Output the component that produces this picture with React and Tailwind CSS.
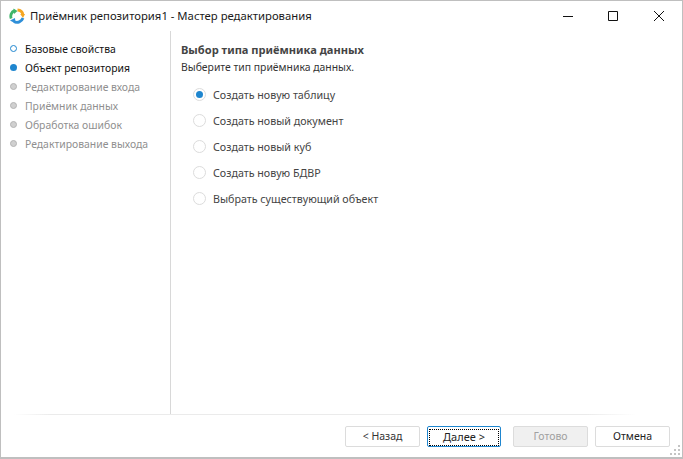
const steps = [
  ["Базовые свойства", "done"],
  ["Объект репозитория", "active"],
  ["Редактирование входа", "off"],
  ["Приёмник данных", "off"],
  ["Обработка ошибок", "off"],
  ["Редактирование выхода", "off"],
];
const options = ["Создать новую таблицу", "Создать новый документ", "Создать новый куб", "Создать новую БДВР", "Выбрать существующий объект"];

function Logo() {
  return (
    <svg width="16" height="16" viewBox="0 0 16 16" fill="none" strokeWidth="2.8">
      <path d="M2.2 10.5 A6.2 6.2 0 0 1 5.5 2.6" stroke="#3fb56a" />
      <path d="M4.5 0.5 L8.5 3 L5 6 Z" fill="#3fb56a" stroke="none" />
      <path d="M8.5 2 A6 6 0 0 1 14 7" stroke="#f5a623" />
      <path d="M11.2 6 L16 6 L14 10 Z" fill="#f5a623" stroke="none" />
      <path d="M14 10 A6.4 6.4 0 0 1 5 13.6" stroke="#2f8fd8" />
      <path d="M1 12.5 L6 10 L6.5 15.5 Z" fill="#2f8fd8" stroke="none" />
    </svg>
  );
}

function Btn({ children, cls }) {
  return (
    <div className={"h-[21px] pt-px flex items-center justify-center rounded-[2px] border text-[10.5px] " + cls}>{children}</div>
  );
}

export default function App() {
  return (
    <div className="w-[683px] h-[459px] flex flex-col bg-white border border-[#bfbfbf] border-b-2 overflow-hidden font-['Noto_Sans',sans-serif] text-[10.4px] relative">
      <div className="h-[30px] shrink-0 flex items-center pl-[8px]">
        <Logo />
        <div className="ml-[5px] text-[11.3px] text-[#1a1a1a]">Приёмник репозитория1 - Мастер редактирования</div>
        <div className="ml-auto flex items-center">
          <svg width="102" height="12" viewBox="0 0 102 12" fill="none" stroke="#111" strokeWidth="1" className="mr-[17px]">
            <path d="M0 6.5H10" />
            <path d="M45.5 1.5h9v9h-9z" />
            <path d="M91 1l10 10M101 1L91 11" />
          </svg>
        </div>
      </div>
      <div className="flex-1 flex min-h-0">
        <div className="w-[170px] shrink-0 border-r border-[#d8d8d8] pt-[8px] pl-[9px]">
          {steps.map(([t, s]) => (
            <div key={t} className="h-[19px] flex items-center">
              <span
                className={
                  "w-[7px] h-[7px] rounded-full shrink-0 " +
                  (s === "done"
                    ? "border border-[#1f86cf] bg-white"
                    : s === "active"
                    ? "bg-[#1f86cf]"
                    : "bg-[#d0d0d0] border border-[#b4b4b4]")
                }
              />
              <span className={"ml-[8px] pt-[2px] " + (s === "off" ? "text-[#8f8f8f]" : "text-[#111111]")}>{t}</span>
            </div>
          ))}
        </div>
        <div className="flex-1 pl-[10px] pt-[9px]">
          <div className="font-bold text-[11.1px] text-[#444444] leading-[19px]">Выбор типа приёмника данных</div>
          <div className="text-[#333333] leading-[17px]">Выберите тип приёмника данных.</div>
          <div className="mt-[5px] pl-[12px] flex flex-col">
            {options.map((o, i) => (
              <div key={o} className="h-[26px] flex items-center">
                <span className="w-[13px] h-[13px] rounded-full border border-[#dcdcdc] bg-white shrink-0 flex items-center justify-center">
                  {i === 0 && <span className="w-[7px] h-[7px] rounded-full bg-[#1f86cf]" />}
                </span>
                <span className="ml-[7px] pt-[2px] text-[10.7px] text-[#444444]">{o}</span>
              </div>
            ))}
          </div>
        </div>
      </div>
      <div className="h-[1px] ml-[13px] mr-[46px] shrink-0 bg-[linear-gradient(to_right,#ffffff,#ebebeb_6%,#ebebeb_92%,#ffffff)]" />
      <div className="h-[42px] shrink-0 flex pt-[11px] pr-[12px] justify-end">
        <Btn cls="w-[75px] border-[#dcdcdc] text-[#333333] bg-white">&lt; Назад</Btn>
        <Btn cls="ml-[7px] w-[74px] border-[#1f86cf] text-[#222222] bg-white">
          <span className="w-[70px] h-[17px] flex items-center justify-center border border-dotted border-black text-[11px]">Далее &gt;</span>
        </Btn>
        <Btn cls="ml-[12px] w-[75px] border-[#dcdcdc] text-[#a0a0a0] bg-[#f0f0f0]">Готово</Btn>
        <Btn cls="ml-[7px] w-[75px] border-[#dcdcdc] text-[#222222] bg-white">Отмена</Btn>
      </div>
      <svg width="11" height="11" viewBox="0 0 11 11" fill="#c4c4c4" className="absolute right-[1px] bottom-[1px]">
        <rect x="8" y="0" width="2" height="2" />
        <rect x="4" y="4" width="2" height="2" />
        <rect x="8" y="4" width="2" height="2" />
        <rect x="0" y="8" width="2" height="2" />
        <rect x="4" y="8" width="2" height="2" />
        <rect x="8" y="8" width="2" height="2" />
      </svg>
    </div>
  );
}
